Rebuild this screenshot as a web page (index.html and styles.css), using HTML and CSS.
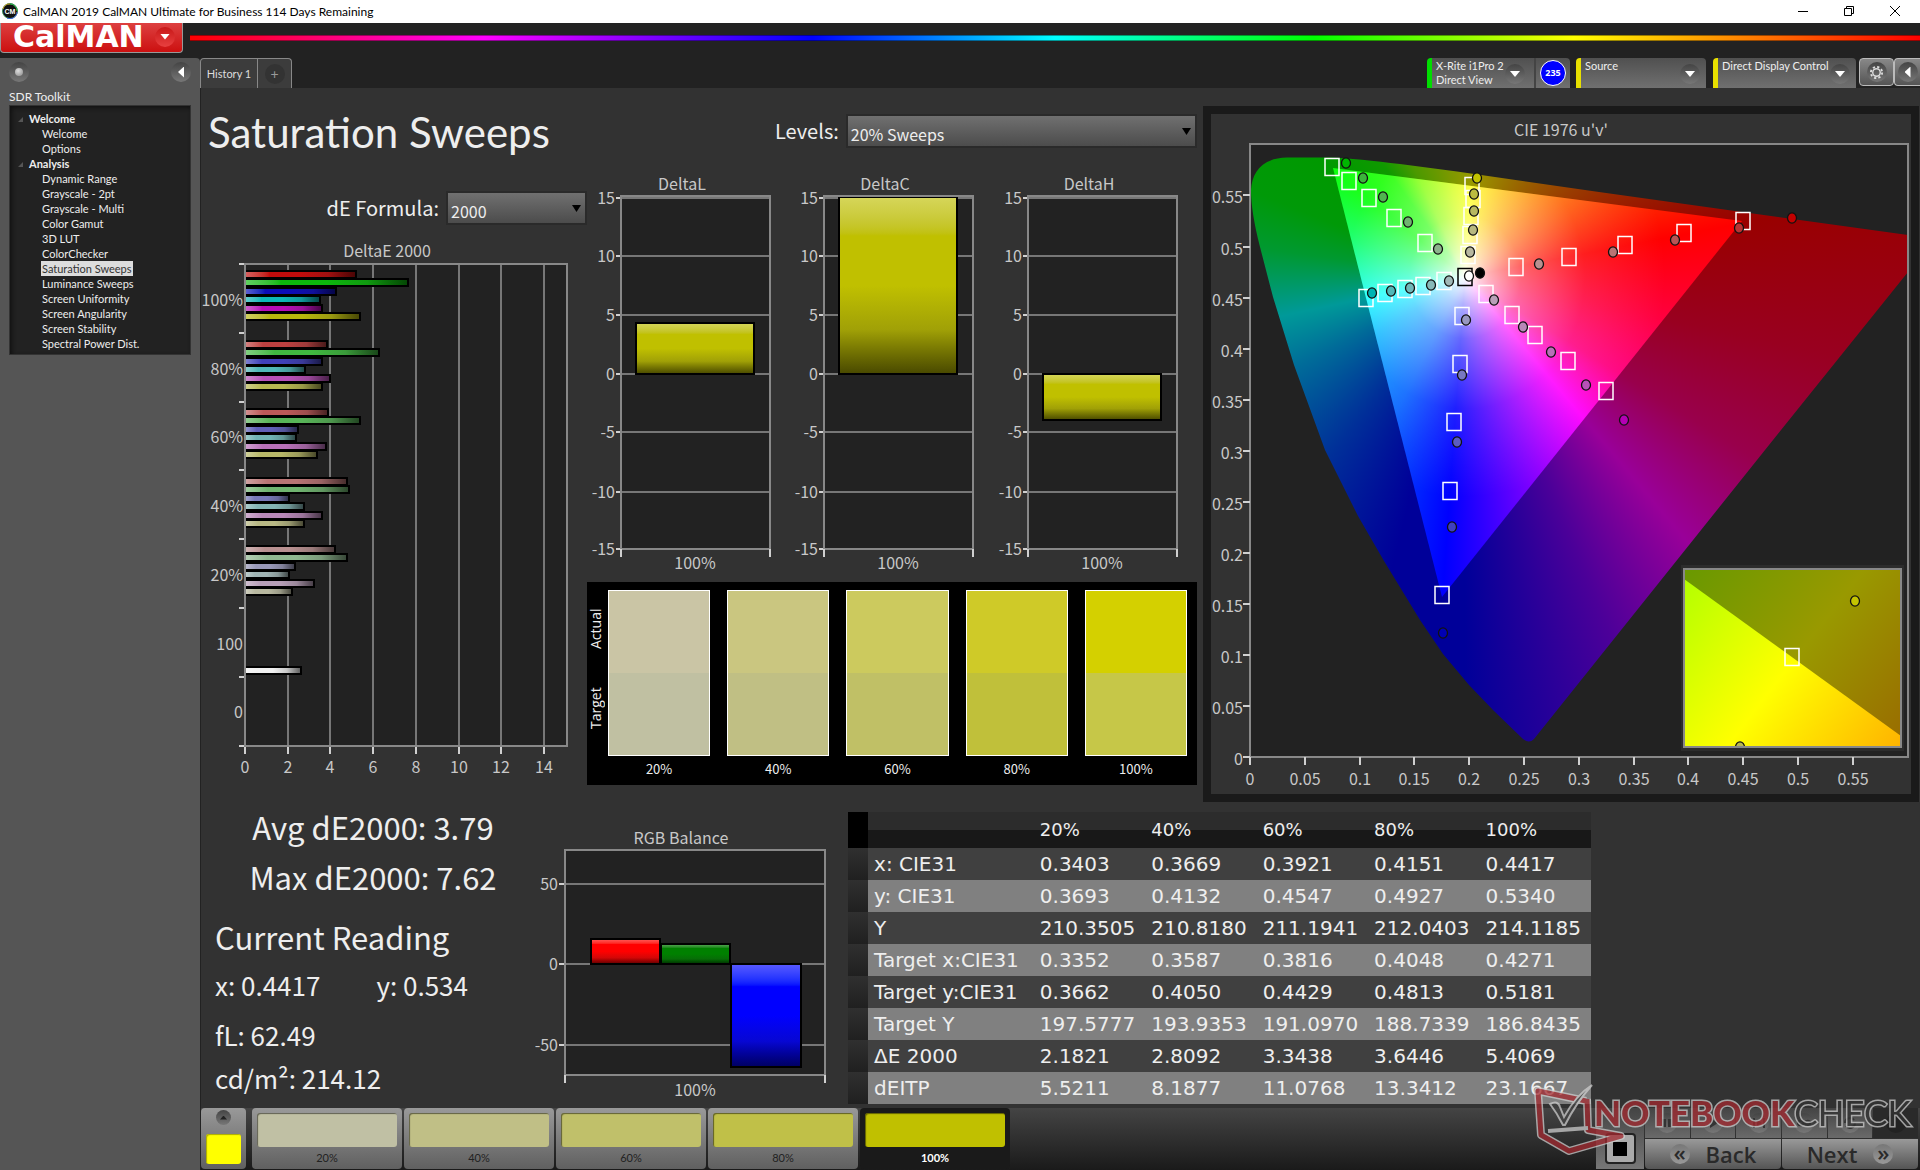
FILE: index.html
```html
<!DOCTYPE html>
<html lang="en">
<head>
    <meta charset="UTF-8">
    <meta name="viewport" content="width=device-width, initial-scale=1.0">
    <title>CalMAN 2019 CalMAN Ultimate for Business</title>
    <link rel="stylesheet" href="styles.css">
</head>
<body>
    <header class="titlebar">
        <svg class="app-icon" viewBox="0 0 16 16" width="16" height="16">
            <circle cx="8" cy="8" r="7.5" fill="#111" stroke="#3a8a5a"/>
            <path d="M1 6A7 7 0 0 1 8 1" stroke="#d0a020" fill="none"/>
            <path d="M8 1A7 7 0 0 1 15 8" stroke="#30c050" fill="none"/>
            <path d="M15 9A7 7 0 0 1 5 15" stroke="#4060e0" fill="none"/>
            <text x="8" y="11" text-anchor="middle" class="app-icon-text">CM</text>
        </svg>
        <span class="titlebar-text">CalMAN 2019 CalMAN Ultimate for Business 114 Days Remaining</span>
        <div class="window-buttons">
            <button aria-label="Minimize"><svg viewBox="0 0 12 12" width="12" height="12"><path d="M1 6.5h10"/></svg></button>
            <button aria-label="Restore"><svg viewBox="0 0 12 12" width="12" height="12"><path d="M1.500 3.500h7v7h-7zM3.500 3.500v-2h7v7h-2"/></svg></button>
            <button aria-label="Close"><svg viewBox="0 0 12 12" width="12" height="12"><path d="M1 1l10 10M11 1l-10 10"/></svg></button>
        </div>
    </header>

    <div class="brandbar">
        <button class="brand">CalMAN<span class="round brand-arrow"><i class="tri-down"></i></span></button>
        <div class="rainbow"></div>
    </div>

    <div class="shell">
        <aside class="sidebar">
            <div class="sidebar-top">
                <button class="round" aria-label="Pin"><i class="pin"></i></button>
                <button class="round" aria-label="Collapse"><i class="tri-left"></i></button>
            </div>
            <h2 class="toolkit">SDR Toolkit</h2>
            <nav class="tree">
                <h3>Welcome</h3>
                <ul>
                    <li><a href="#">Welcome</a></li>
                    <li><a href="#">Options</a></li>
                </ul>
                <h3>Analysis</h3>
                <ul>
                    <li><a href="#">Dynamic Range</a></li>
                    <li><a href="#">Grayscale - 2pt</a></li>
                    <li><a href="#">Grayscale - Multi</a></li>
                    <li><a href="#">Color Gamut</a></li>
                    <li><a href="#">3D LUT</a></li>
                    <li><a href="#">ColorChecker</a></li>
                    <li><a href="#" class="current">Saturation Sweeps</a></li>
                    <li><a href="#">Luminance Sweeps</a></li>
                    <li><a href="#">Screen Uniformity</a></li>
                    <li><a href="#">Screen Angularity</a></li>
                    <li><a href="#">Screen Stability</a></li>
                    <li><a href="#">Spectral Power Dist.</a></li>
                </ul>
            </nav>
        </aside>

        <div class="content">
            <div class="toolbar">
                <div class="tabs">
                    <button class="tab">History 1</button>
                    <button class="tab tab-add" aria-label="Add tab"><span class="round">+</span></button>
                </div>
                <div class="devices">
                    <button class="device meter"><span>X-Rite i1Pro 2<br>Direct View</span><span class="round"><i class="tri-down"></i></span></button>
                    <button class="level"><span>235</span></button>
                    <button class="device source"><span>Source</span><span class="round"><i class="tri-down"></i></span></button>
                    <button class="device display"><span>Direct Display Control</span><span class="round"><i class="tri-down"></i></span></button>
                    <button class="square" aria-label="Settings"><span class="round">
                        <svg viewBox="0 0 16 16" width="15" height="15"><circle cx="8" cy="8" r="4" fill="none" stroke="#ddd" stroke-width="1.500"/><circle cx="8" cy="8" r="6" fill="none" stroke="#ddd" stroke-width="2" stroke-dasharray="2.400 2.310"/></svg>
                    </span></button>
                    <button class="square last" aria-label="Collapse panel"><span class="round"><i class="tri-left"></i></span></button>
                </div>
            </div>

            <main class="workspace">
                <section class="row-top">
                    <div class="col-left">
                        <h1>Saturation Sweeps</h1>
                        <div class="field formula">
                            <label for="formula">dE Formula:</label>
                            <div class="select"><select id="formula"><option>2000</option></select></div>
                        </div>
                        <svg id="deltaE" class="chart" viewBox="201 225 386 565"></svg>
                    </div>
                    <div class="col-mid">
                        <div class="field levels">
                            <label for="levels">Levels:</label>
                            <div class="select"><select id="levels"><option>20% Sweeps</option></select></div>
                        </div>
                        <svg id="deltas" class="chart" viewBox="587 148 616 434"></svg>
                        <div class="swatches">
                            <div class="swatch-side"><span>Actual</span><span>Target</span></div>
                            <figure><div class="pair s20"></div><figcaption>20%</figcaption></figure>
                            <figure><div class="pair s40"></div><figcaption>40%</figcaption></figure>
                            <figure><div class="pair s60"></div><figcaption>60%</figcaption></figure>
                            <figure><div class="pair s80"></div><figcaption>80%</figcaption></figure>
                            <figure><div class="pair s100"></div><figcaption>100%</figcaption></figure>
                        </div>
                    </div>
                    <div class="cie-panel">
                        <svg id="cie" class="chart" viewBox="1211 114 700 680">
                            <defs>
                                <clipPath id="locus"><path d="M1251 190C1252 172 1262 158 1287 157.500L1330 157.500C1347 158 1375 161 1400 164L1457 171.500L1599 192L1742 212L1908 235V272L1765 450L1534 739Q1529 744 1523 739L1494 711L1469 685L1443 654L1420 620L1384 561L1358 516L1325 450L1294 365L1273 297L1260 247Q1251 212 1251 190Z"/></clipPath>
                                <clipPath id="gamut"><path d="M1333 168L1742 221L1442 597Z"/></clipPath>
                                <clipPath id="insetClip"><rect x="1684" y="569" width="217" height="178"/></clipPath>
                                <linearGradient id="insetDark" gradientUnits="userSpaceOnUse" x1="1690" y1="573" x2="1904" y2="739"><stop offset="0" stop-color="#6b9900"/><stop offset=".5" stop-color="#999900"/><stop offset="1" stop-color="#996c00"/></linearGradient>
                                <linearGradient id="insetLight" gradientUnits="userSpaceOnUse" x1="1690" y1="573" x2="1904" y2="739"><stop offset="0" stop-color="#b4ff00"/><stop offset=".5" stop-color="#ffff00"/><stop offset="1" stop-color="#ffb400"/></linearGradient>
                            </defs>
                            <rect class="plot" x="1250" y="144" width="658" height="613"/>
                            <foreignObject x="1250" y="144" width="658" height="613" clip-path="url(#locus)"><div class="hues hues-dark"></div></foreignObject>
                            <foreignObject x="1250" y="144" width="658" height="613" clip-path="url(#gamut)"><div class="hues"></div></foreignObject>
                            <rect class="frame" x="1250" y="144" width="658" height="613"/>
                        </svg>
                    </div>
                </section>

                <section class="row-bottom">
                    <div class="readings">
                        <p class="big total">Avg dE2000: 3.79</p>
                        <p class="big total">Max dE2000: 7.62</p>
                        <h2 class="big">Current Reading</h2>
                        <p class="xy"><span>x: 0.4417</span><span>y: 0.534</span></p>
                        <p class="lum">fL: 62.49</p>
                        <p class="cd">cd/m²: 214.12</p>
                    </div>
                    <svg id="rgb" class="chart" viewBox="535 802 313 306"></svg>
                    <table class="results">
                        <thead>
                            <tr><td class="gutter"></td><th></th><th>20%</th><th>40%</th><th>60%</th><th>80%</th><th>100%</th></tr>
                        </thead>
                        <tbody>
                            <tr><td class="gutter"></td><th>x: CIE31</th><td>0.3403</td><td>0.3669</td><td>0.3921</td><td>0.4151</td><td>0.4417</td></tr>
                            <tr><td class="gutter"></td><th>y: CIE31</th><td>0.3693</td><td>0.4132</td><td>0.4547</td><td>0.4927</td><td>0.5340</td></tr>
                            <tr><td class="gutter"></td><th>Y</th><td>210.3505</td><td>210.8180</td><td>211.1941</td><td>212.0403</td><td>214.1185</td></tr>
                            <tr><td class="gutter"></td><th>Target x:CIE31</th><td>0.3352</td><td>0.3587</td><td>0.3816</td><td>0.4048</td><td>0.4271</td></tr>
                            <tr><td class="gutter"></td><th>Target y:CIE31</th><td>0.3662</td><td>0.4050</td><td>0.4429</td><td>0.4813</td><td>0.5181</td></tr>
                            <tr><td class="gutter"></td><th>Target Y</th><td>197.5777</td><td>193.9353</td><td>191.0970</td><td>188.7339</td><td>186.8435</td></tr>
                            <tr><td class="gutter"></td><th>ΔE 2000</th><td>2.1821</td><td>2.8092</td><td>3.3438</td><td>3.6446</td><td>5.4069</td></tr>
                            <tr><td class="gutter"></td><th>dEITP</th><td>5.5211</td><td>8.1877</td><td>11.0768</td><td>13.3412</td><td>23.1667</td></tr>
                        </tbody>
                    </table>
                </section>
            </main>

            <footer class="bottombar">
                <button class="picker" aria-label="Pattern colour"><span class="round small"><i class="tri-up"></i></span><span class="picker-color"></span></button>
                <div class="steps">
                    <button class="step p20"><span></span>20%</button>
                    <button class="step p40"><span></span>40%</button>
                    <button class="step p60"><span></span>60%</button>
                    <button class="step p80"><span></span>80%</button>
                    <button class="step p100 active"><span></span>100%</button>
                </div>
                <button class="stop" aria-label="Stop"><i></i></button>
                <div class="controls">
                    <div class="transport">
                        <button aria-label="Pause"><span class="round"><svg viewBox="0 0 16 16" width="16" height="16"><path d="M3 4h4v8h-4zM9 4h4v8h-4z"/></svg></span></button>
                        <button aria-label="Play"><span class="round"><svg viewBox="0 0 16 16" width="16" height="16"><path d="M5 3l8 5-8 5z"/></svg></span></button>
                        <button aria-label="Play range"><span class="round"><svg viewBox="0 0 16 16" width="16" height="16"><path d="M2 3h2v10h-2zM12 3h2v10h-2zM6 5l5 3-5 3z"/></svg></span></button>
                        <button aria-label="Loop"><span class="round"><svg viewBox="0 0 16 16" width="16" height="16"><path class="stroked" d="M8 8C6 5 2 5 2 8s4 3 6 0 6-3 6 0-4 3-6 0z"/></svg></span></button>
                        <button aria-label="Refresh"><span class="round"><svg viewBox="0 0 16 16" width="16" height="16"><path class="stroked" d="M3 8a5 5 0 0 1 9-3M13 8a5 5 0 0 1-9 3"/></svg></span></button>
                        <button class="off" aria-label="Record"><span class="round"></span></button>
                    </div>
                    <div class="pager">
                        <button><span class="round">«</span>Back</button>
                        <button>Next<span class="round">»</span></button>
                    </div>
                </div>
            </footer>
        </div>
    </div>

    <svg class="watermark" viewBox="1530 1082 384 80" width="384" height="80">
        <g fill="none" stroke-linejoin="round">
            <path d="M1586 1101L1538 1091L1541 1135L1569 1151L1621 1136L1588 1130L1587 1099" stroke="#ccc" stroke-width="8"/>
            <path d="M1586 1101L1538 1091L1541 1135L1569 1151L1621 1136L1588 1130L1587 1099" stroke="#a32a30" stroke-width="5"/>
            <path d="M1548 1131L1588 1128" stroke="#ccc" stroke-width="4"/>
        </g>
        <path d="M1550 1104q8-4 10 3l4 10q12-22 28-32q-16 18-27 40h-2q-6-12-13-21z" fill="#444" stroke="#ccc" stroke-width="2"/>
        <text x="1594" y="1126"><tspan class="wm-red">NOTEBOOK</tspan><tspan class="wm-gray">CHECK</tspan></text>
    </svg>
    <script src="charts.js"></script>
</body>
</html>
```

FILE: charts.js
```js
const NS = 'http://www.w3.org/2000/svg';

function add(parent, tag, attrs, text) {
    const el = document.createElementNS(NS, tag);
    for (const key in attrs) el.setAttribute(key, attrs[key]);
    if (text !== undefined) el.textContent = text;
    parent.appendChild(el);
    return el;
}

function line(svg, x1, y1, x2, y2, cls) {
    add(svg, 'line', { x1, y1, x2, y2, class: cls });
}

function label(svg, x, y, text, anchor) {
    add(svg, 'text', { x, y, 'text-anchor': anchor || 'middle', class: 'axis' }, text);
}

// glossy bar fill: light edge, flat colour, dark edge
let gradientCount = 0;
function gloss(svg, color, horizontal) {
    const id = 'gloss' + gradientCount++;
    const g = add(svg, 'linearGradient', { id, x1: 0, y1: 0, x2: horizontal ? 1 : 0, y2: horizontal ? 0 : 1 });
    add(g, 'stop', { offset: 0, 'stop-color': `color-mix(in srgb, ${color} 65%, white)` });
    add(g, 'stop', { offset: 0.22, 'stop-color': color });
    add(g, 'stop', { offset: 0.5, 'stop-color': color });
    add(g, 'stop', { offset: 0.75, 'stop-color': `color-mix(in srgb, ${color} 80%, #222)` });
    add(g, 'stop', { offset: 1, 'stop-color': `color-mix(in srgb, ${color} 38%, black)` });
    return `url(#${id})`;
}

function bar(svg, x, y, width, height, color, horizontal) {
    add(svg, 'rect', { x, y, width, height, fill: gloss(svg, color, horizontal), stroke: '#000', 'stroke-width': 2 });
}

function drawDeltaE() {
    const svg = document.getElementById('deltaE');
    const left = 245, right = 567, top = 264, bottom = 746;
    label(svg, 387, 257, 'DeltaE 2000');
    add(svg, 'rect', { x: left, y: top, width: right - left, height: bottom - top, class: 'plot' });
    for (let i = 0; i <= 14; i += 2) {
        const x = Math.round(left + i * 21.35);
        line(svg, x, top, x, bottom, 'grid');
        line(svg, x, bottom, x, bottom + 8, 'tick');
        label(svg, x, 773, i);
    }
    ['100%', '80%', '60%', '40%', '20%', '100', '0'].forEach((name, i) => {
        label(svg, 243, 306 + Math.round(i * 68.7), name, 'end');
    });
    for (let i = 0; i < 8; i++) {
        const y = Math.round(top + i * 68.8);
        line(svg, 239, y, 244, y, 'tick');
    }
    const groups = [
        [271, [356, 408, 336, 320, 322, 360], ['#c00c0c', '#0cb80c', '#0c0cb8', '#0cb8b8', '#b80cb8', '#b8b80c']],
        [341, [327, 379, 322, 305, 330, 322], ['#bc4040', '#40b840', '#4040b8', '#50b8b8', '#b850b8', '#b8b850']],
        [409, [328, 360, 298, 296, 326, 317], ['#bc5858', '#58b458', '#6060b8', '#70b4b4', '#b870b8', '#b8b868']],
        [478, [347, 349, 289, 304, 322, 304], ['#b87474', '#70b470', '#7878b8', '#84b4b4', '#b888b8', '#b8b884']],
        [546, [335, 347, 295, 289, 314, 292], ['#b89090', '#90b890', '#9898b8', '#a0b4b4', '#b8a0b8', '#b8b8a0']]
    ];
    groups.forEach(([y, ends, colors]) => {
        ends.forEach((end, i) => bar(svg, left, y + Math.round(i * 8.4), end - left, 7, colors[i], true));
    });
    bar(svg, left, 667, 56, 7, '#f0f0f0', true);
    add(svg, 'rect', { x: left, y: top, width: right - left, height: bottom - top, class: 'frame' });
}

function drawDeltas() {
    const svg = document.getElementById('deltas');
    const rows = [[15, 198], [10, 256], [5, 315], [0, 374], [-5, 432], [-10, 492], [-15, 549]];
    const charts = [
        ['DeltaL', 621, 323, 51],
        ['DeltaC', 824, 197, 177],
        ['DeltaH', 1028, 374, 46]
    ];
    charts.forEach(([name, x, barTop, barHeight]) => {
        label(svg, x + 61, 190, name);
        add(svg, 'rect', { x, y: 196, width: 149, height: 353, class: 'plot' });
        rows.forEach(([value, y]) => {
            line(svg, x, y, x + 149, y, 'grid');
            line(svg, x - 5, y, x, y, 'tick');
            label(svg, x - 6, y + 6, value, 'end');
        });
        line(svg, x, 197, x + 149, 197, 'grid');
        bar(svg, x + 15, barTop, 118, barHeight, '#c0c000', false);
        add(svg, 'rect', { x, y: 196, width: 149, height: 353, class: 'frame' });
        line(svg, x, 549, x, 557, 'tick');
        line(svg, x + 149, 549, x + 149, 557, 'tick');
        label(svg, x + 74, 569, '100%');
    });
}

function drawRgb() {
    const svg = document.getElementById('rgb');
    label(svg, 681, 844, 'RGB Balance');
    add(svg, 'rect', { x: 565, y: 850, width: 260, height: 225, class: 'plot' });
    [[50, 884], [0, 964], [-50, 1045]].forEach(([value, y]) => {
        line(svg, 565, y, 825, y, 'grid');
        line(svg, 559, y, 565, y, 'tick');
        label(svg, 558, y + 6, value, 'end');
    });
    bar(svg, 591, 939, 69, 25, '#ff0000');
    bar(svg, 661, 944, 69, 20, '#008000');
    bar(svg, 731, 964, 70, 103, '#0000ff');
    add(svg, 'rect', { x: 565, y: 850, width: 260, height: 225, class: 'frame' });
    line(svg, 565, 1075, 565, 1083, 'tick');
    line(svg, 825, 1075, 825, 1083, 'tick');
    label(svg, 695, 1096, '100%');
}

function square(svg, x, y, stroke) {
    add(svg, 'rect', { x: x - 7, y: y - 8.5, width: 14, height: 17, fill: 'none', stroke: stroke || '#fff', 'stroke-width': 1.5 });
}

function dot(svg, x, y, fill) {
    add(svg, 'ellipse', { cx: x, cy: y, rx: 4.5, ry: 5.2, fill, stroke: '#111', 'stroke-width': 1.3 });
}

function drawCie() {
    const svg = document.getElementById('cie');
    label(svg, 1561, 136, "CIE 1976 u'v'");
    for (let i = 0; i <= 11; i++) {
        const value = String(Math.round(i * 5) / 100);
        const x = Math.round(1250 + i * 54.8);
        const y = Math.round(757 - i * 51.05);
        line(svg, x, 757, x, 765, 'tick');
        label(svg, x, 785, value);
        line(svg, 1243, y, 1250, y, 'tick');
        label(svg, 1243, y + 8, value, 'end');
    }
    const targets = [
        [1332, 167], [1349, 181], [1369, 198], [1394, 218], [1425, 243],
        [1472, 186], [1473, 199], [1471, 216], [1470, 235], [1468, 255],
        [1366, 298], [1385, 293], [1405, 289], [1423, 286], [1444, 281],
        [1516, 267], [1569, 257], [1625, 245], [1684, 233], [1743, 221],
        [1486, 294], [1512, 315], [1535, 335], [1568, 361], [1606, 391],
        [1462, 316], [1460, 364], [1454, 422], [1450, 491], [1442, 595]
    ];
    const measured = [
        [1346, 163, '#00b400'], [1363, 178, '#3cb43c'], [1383, 197, '#50b450'], [1408, 222, '#70b470'], [1438, 249, '#8cb48c'],
        [1477, 178, '#c4c400'], [1474, 194, '#bcbc40'], [1474, 211, '#b8b860'], [1473, 230, '#b8b880'], [1470, 252, '#b8b8a0'],
        [1539, 264, '#b89090'], [1613, 252, '#b87474'], [1675, 240, '#b85454'], [1739, 228, '#b83434'], [1792, 218, '#c40000'],
        [1494, 300, '#b8a0b8'], [1523, 327, '#b888b8'], [1551, 352, '#b870b8'], [1586, 385, '#b850b8'], [1624, 420, '#b400b4'],
        [1466, 320, '#9898c0'], [1462, 375, '#7878c0'], [1457, 442, '#5c5cc0'], [1452, 527, '#4040c0'], [1443, 633, '#0000b4'],
        [1372, 293, '#00b4b4'], [1391, 291, '#50b8b8'], [1410, 288, '#70b8b8'], [1431, 285, '#88b8b8'], [1449, 281, '#a0b8b8'],
        [1480, 273, '#000']
    ];
    targets.forEach(([x, y]) => square(svg, x, y));
    square(svg, 1465, 277, '#000');
    measured.forEach(([x, y, fill]) => dot(svg, x, y, fill));
    dot(svg, 1469, 276, '#fff');

    // magnified view round the selected target
    add(svg, 'rect', { x: 1681, y: 565, width: 223, height: 186, fill: '#2c2c2c' });
    add(svg, 'rect', { x: 1684, y: 569, width: 217, height: 178, fill: 'url(#insetDark)' });
    add(svg, 'path', { d: 'M1684 579L1901 736V747H1684Z', fill: 'url(#insetLight)' });
    const inset = add(svg, 'g', { 'clip-path': 'url(#insetClip)' });
    dot(inset, 1855, 601, '#c4c400');
    dot(inset, 1740, 747, '#b8b850');
    square(inset, 1792, 657);
    add(svg, 'rect', { x: 1684, y: 569, width: 217, height: 178, class: 'frame' });
}

drawDeltaE();
drawDeltas();
drawRgb();
drawCie();
```

FILE: styles.css
```css
* {
    box-sizing: border-box;
}
body {
    margin: 0;
    min-height: 100vh;
    display: flex;
    flex-direction: column;
    background: #222;
    color: #eee;
    font-family: "Lato", "Liberation Sans", sans-serif;
    font-size: 11px;
}
h1, h2, h3, p, ul, figure {
    margin: 0;
    padding: 0;
    font-weight: normal;
}
ul {
    list-style: none;
}
button {
    border: none;
    padding: 0;
    color: inherit;
    font: inherit;
    background: none;
    white-space: nowrap;
}

/* window title */
.titlebar {
    height: 23px;
    display: flex;
    align-items: center;
    gap: 5px;
    padding-left: 2px;
    padding-bottom: 1px;
    background: #fff;
    color: #000;
    font-family: "Lato", sans-serif;
    font-size: 12px;
}
.app-icon-text {
    font: bold 7px "Liberation Sans", sans-serif;
    fill: #fff;
}
.window-buttons {
    margin-left: auto;
    display: flex;
    padding-right: 2px;
}
.window-buttons button {
    width: 46px;
    height: 20px;
}
.window-buttons svg {
    fill: none;
    stroke: #000;
    display: block;
    margin: 0 auto;
}

/* logo and rainbow strip */
.brandbar {
    height: 35px;
    display: flex;
    gap: 7px;
}
.brand {
    width: 183px;
    height: 30px;
    display: flex;
    align-items: center;
    justify-content: space-between;
    padding: 0 7px 2px 12px;
    border: 1px solid #999;
    border-top: none;
    border-radius: 0 0 4px 4px;
    background: linear-gradient(#dd4040, #cc1010);
    color: #fff;
    font: bold 30px/28px "DejaVu Sans", sans-serif;
}
.rainbow {
    flex: 1;
    height: 6px;
    margin-top: 12px;
    border: 1px solid rgba(0, 0, 0, 0.4);
    border-width: 1px 0;
    background: linear-gradient(90deg, #f00, #f0f 17%, #00f 36%, #0ff 50%, #0f0 65%, #ff0 80%, #f00);
}
.round {
    width: 20px;
    height: 20px;
    border-radius: 50%;
    display: flex;
    align-items: center;
    justify-content: center;
    flex: none;
    background: linear-gradient(#444, #777);
}
.brand-arrow {
    background: linear-gradient(#c81818, #e84040);
}
.tri-down, .tri-left, .tri-up {
    width: 10px;
    height: 6px;
    background: #fff;
    clip-path: polygon(0 0, 100% 0, 50% 100%);
}
.tri-left {
    width: 6px;
    height: 11px;
    clip-path: polygon(100% 0, 100% 100%, 0 50%);
}
.tri-up {
    width: 7px;
    height: 4px;
    background: #222;
    clip-path: polygon(50% 0, 100% 100%, 0 100%);
}

/* sidebar */
.shell {
    flex: 1;
    display: flex;
}
.sidebar {
    width: 200px;
    flex: none;
    padding: 4px 9px;
    border-radius: 0 4px 0 0;
    background: #555;
}
.sidebar-top {
    display: flex;
    justify-content: space-between;
    align-items: center;
}
.pin {
    width: 8px;
    height: 8px;
    border-radius: 50%;
    background: radial-gradient(circle at 40% 35%, #ddd, #888);
}
.toolkit {
    margin: 6px 0 0;
    font-size: 12px;
    line-height: 17px;
}
.tree {
    padding: 5px 0 3px;
    background: #222;
    border: 1px solid #333;
    box-shadow: inset 2px 2px 4px #111;
}
.tree h3 {
    position: relative;
    padding-left: 19px;
    font-size: 11px;
    line-height: 15px;
    font-weight: bold;
}
.tree h3::before {
    content: "";
    position: absolute;
    left: 8px;
    top: 6px;
    width: 5px;
    height: 5px;
    background: #555;
    clip-path: polygon(100% 0, 100% 100%, 0 100%);
}
.tree li {
    padding-left: 32px;
    line-height: 15px;
}
.tree a {
    color: #eee;
    text-decoration: none;
}
.tree .current {
    background: #ddd;
    color: #333;
    outline: 1px solid #ddd;
}

/* tabs and devices */
.content {
    flex: 1;
    min-width: 0;
    display: flex;
    flex-direction: column;
}
.toolbar {
    height: 30px;
    display: flex;
    justify-content: space-between;
}
.tabs, .devices {
    display: flex;
}
.tab {
    width: 58px;
    height: 30px;
    border: 1px solid #888;
    border-bottom: none;
    border-radius: 4px 0 0 0;
    background: #3c3c3c;
    color: #ddd;
    text-align: center;
}
.tab-add {
    width: 34px;
    display: flex;
    align-items: center;
    justify-content: center;
    border-left: none;
    border-radius: 0 4px 0 0;
}
.tab-add .round {
    background: #333;
    color: #999;
    font-size: 14px;
}
.device {
    display: flex;
    justify-content: space-between;
    height: 30px;
    padding: 1px 6px 0 4px;
    border-left: 5px solid #e8e000;
    border-radius: 4px 4px 0 0;
    background: linear-gradient(#505050, #707070);
    line-height: 14px;
    text-align: left;
    margin-right: 7px;
}
.device .round {
    margin-top: 5px;
}
.device.meter {
    width: 107px;
    padding-right: 9px;
    border-left-color: #00dd00;
    border-radius: 4px 0 0 0;
    margin-right: 0;
}
.level {
    width: 36px;
    margin-right: 6px;
    border-left: 2px solid #444;
    border-radius: 0 4px 0 0;
    background: linear-gradient(#505050, #707070);
}
.level span {
    width: 26px;
    height: 26px;
    margin: 0 auto;
    display: block;
    border: 1px solid #fff;
    border-radius: 50%;
    background: #00f;
    color: #fff;
    font: bold 9px/24px "Open Sans", sans-serif;
}
.device.source {
    width: 130px;
}
.device.display {
    width: 143px;
    margin-right: 3px;
}
.square {
    width: 35px;
    height: 28px;
    display: flex;
    align-items: center;
    justify-content: center;
    border: 1px solid #bbb;
    border-radius: 4px;
    background: linear-gradient(#888, #555);
}
.square.last {
    width: 26px;
    border-right: none;
    border-radius: 4px 0 0 4px;
}

/* work area */
.workspace {
    flex: 1;
    background: #323232;
    border-left: 1px solid #222;
    font-family: "Noto Sans CJK SC", "Lato", sans-serif;
}
.row-top {
    display: grid;
    grid-template-columns: minmax(0, 386fr) minmax(0, 616fr) minmax(0, 717fr);
}
.chart {
    display: block;
    width: 100%;
}
.col-left {
    padding-top: 14px;
}
h1 {
    padding-left: 7px;
    font-family: "Lato", sans-serif;
    font-size: 42px;
    line-height: 60px;
    white-space: nowrap;
}
.field {
    display: flex;
    align-items: center;
    gap: 7px;
}
.field label {
    font-size: 20px;
    line-height: 34px;
    white-space: nowrap;
}
.formula {
    margin-top: 29px;
    justify-content: flex-end;
}
.formula .select {
    width: 141px;
}
.levels {
    padding: 26px 6px 0 188px;
}
.levels .select {
    flex: 1;
}
.select {
    position: relative;
}
.select::after {
    content: "";
    position: absolute;
    right: 6px;
    top: 14px;
    width: 9px;
    height: 7px;
    background: #000;
    clip-path: polygon(0 0, 100% 0, 50% 100%);
    pointer-events: none;
}
select {
    display: block;
    width: 100%;
    height: 34px;
    padding: 5px 3px 0;
    appearance: none;
    border: 2px solid #2a2a2a;
    border-radius: 0;
    background: linear-gradient(#707070, #4c4c4c);
    color: #eee;
    font-family: inherit;
    font-size: 16px;
}

/* chart parts */
.axis {
    font-size: 16px;
    fill: #c8c8c8;
}
.plot {
    fill: #222;
}
.frame {
    fill: none;
    stroke: #888;
    stroke-width: 2;
}
.grid {
    stroke: #777;
    stroke-width: 2;
}
.tick {
    stroke: #d0d0d0;
    stroke-width: 2;
}

.swatches {
    height: 203px;
    margin-right: 6px;
    padding: 8px 10px 0 1px;
    display: flex;
    gap: 17px;
    background: #000;
}
.swatch-side {
    width: 16px;
    height: 166px;
    margin-right: -13px;
    padding-top: 8px;
    display: flex;
    flex-direction: row-reverse;
    justify-content: space-around;
    writing-mode: vertical-rl;
    transform: rotate(180deg);
    font: 14px/16px "Open Sans", sans-serif;
}
.swatches figure {
    flex: 1;
    text-align: center;
}
.pair {
    height: 166px;
    border: 1px solid #fff;
}
figcaption {
    font-size: 13px;
    line-height: 26px;
}
.s20 { background: linear-gradient(#cac5a5 50%, #c0c0a2 50%); }
.s40 { background: linear-gradient(#cac680 50%, #c0bf84 50%); }
.s60 { background: linear-gradient(#ccca5e 50%, #c0c066 50%); }
.s80 { background: linear-gradient(#cfca28 50%, #c0c03a 50%); }
.s100 { background: linear-gradient(#d4d000 50%, #c6c748 50%); }

.cie-panel {
    margin: 18px 1px 0 0;
    align-self: start;
    border: 8px solid #1a1a1a;
}
/* chromaticity colours turn about the white point */
.hues {
    width: 658px;
    height: 613px;
    background:
        radial-gradient(ellipse 200px 220px at 215px 133px, #fff, rgba(255, 255, 255, 0.7) 12%, rgba(255, 255, 255, 0.4) 28%, rgba(255, 255, 255, 0.12) 60%, transparent),
        conic-gradient(from 4deg at 215px 133px, #ff0, #ffa000 29deg, #ff5000 53deg, #f00 75deg, #ff0040 98deg, #ff0080 118deg, #f0f 136deg, #8000ff 158deg, #00f 180deg, #0060ff 203deg, #00b4ff 233deg, #0ff 254deg, #00ff60 284deg, #0f0 305deg, #20ff00 320deg, #80ff00 331deg, #d0ff00 348deg, #ff0);
}
.hues-dark {
    background: conic-gradient(from 4deg at 215px 133px, #990, #996000 29deg, #993000 53deg, #900 75deg, #990020 98deg, #99004c 118deg, #909 136deg, #4c0099 154deg, #009 176deg, #009 190deg, #003099 213deg, #006c99 238deg, #099 254deg, #009930 274deg, #009908 288deg, #090 305deg, #109900 320deg, #4c9900 331deg, #7c9900 348deg, #990);
}

/* readings */
.row-bottom {
    display: grid;
    grid-template-columns: minmax(0, 334fr) minmax(0, 313fr) minmax(0, 743fr) minmax(0, 329fr);
    align-items: start;
}
.readings {
    padding: 0 4px 0 14px;
    font-size: 26px;
    line-height: 40px;
    white-space: nowrap;
}
.big {
    font-size: 31px;
    line-height: 50px;
}
.total {
    text-align: center;
}
h2.big {
    margin-top: 10px;
}
.xy {
    display: flex;
    gap: 56px;
    margin-top: 3px;
}
.lum {
    margin-top: 10px;
}
.cd {
    margin-top: 3px;
}

.results {
    width: 100%;
    margin-top: 10px;
    border-collapse: collapse;
    table-layout: fixed;
    font: 20px "DejaVu Sans", sans-serif;
}
.results th, .results td {
    height: 32px;
    padding: 0 0 0 6px;
    text-align: left;
    font-weight: normal;
    line-height: 24px;
    white-space: nowrap;
}
.results thead th {
    height: 36px;
    width: 15%;
    font-size: 18px;
    background: linear-gradient(#2c2c2c 50%, #181818 50%);
}
.results thead th:nth-child(2) {
    width: 165px;
}
.results thead .gutter {
    width: 20px;
    background: #000;
}
.results tbody .gutter {
    background: linear-gradient(#303030, #202020);
}
.results tbody tr {
    background: #404040;
}
.results tbody tr:nth-child(even) {
    background: #808080;
}

/* bottom bar */
.bottombar {
    height: 62px;
    display: flex;
    border-left: 1px solid #222;
    background: linear-gradient(#444, #1a1a1a);
}
.picker {
    width: 45px;
    height: 61px;
    margin-right: 6px;
    display: flex;
    flex-direction: column;
    align-items: center;
    gap: 9px;
    padding-top: 2px;
    border-radius: 4px;
    background: linear-gradient(#999, #606060);
}
.small {
    width: 15px;
    height: 15px;
}
.picker-color {
    width: 35px;
    height: 30px;
    border-radius: 3px;
    background: #ff0;
    box-shadow: inset 1px 1px 1px #aa0;
}
.steps {
    display: flex;
    gap: 2px;
}
.step {
    width: 150px;
    height: 61px;
    padding: 5px 5px 0;
    border-radius: 4px;
    background: linear-gradient(#999, #606060);
    color: #222;
    line-height: 22px;
    display: flex;
    flex-direction: column;
    align-items: stretch;
}
.step span {
    height: 36px;
    border-radius: 3px;
    box-shadow: inset 1px 1px 1px rgba(0, 0, 0, 0.5);
}
.p20 span { background: #c0c0a4; }
.p40 span { background: #c0bf86; }
.p60 span { background: #c0c06a; }
.p80 span { background: #c0c048; }
.p100 span { background: #c0c000; }
.step.active {
    background: #1a1a1a;
    color: #fff;
    font-weight: bold;
}
.stop {
    width: 48px;
    height: 61px;
    margin-left: auto;
    display: flex;
    align-items: flex-end;
    justify-content: center;
    padding-bottom: 5px;
    background: linear-gradient(#444, #777);
}
.stop i {
    width: 31px;
    height: 31px;
    border: 2px solid #222;
    border-radius: 4px;
    background: linear-gradient(#000, #000) center / 14px 14px no-repeat #aaa;
}
.controls {
    width: 273px;
    margin: 0 2px 0 1px;
}
.transport, .pager {
    display: flex;
    gap: 1px;
}
.transport {
    margin-bottom: 1px;
}
.transport button {
    flex: 1;
    height: 30px;
    display: flex;
    align-items: center;
    justify-content: center;
    background: linear-gradient(#444, #6a6a6a);
}
.transport .off {
    background: #2a2a2a;
}
.transport .off .round {
    background: #222;
}
.transport path {
    fill: #333;
}
.transport .stroked {
    fill: none;
    stroke: #333;
    stroke-width: 2;
}
.pager button {
    flex: 1;
    height: 30px;
    display: flex;
    align-items: center;
    justify-content: center;
    gap: 16px;
    border-radius: 0 0 4px 4px;
    background: linear-gradient(#999, #555);
    color: #2a2a2a;
    font: 600 22px/28px "Open Sans", sans-serif;
}
.pager .round {
    background: linear-gradient(#777, #999);
    padding-bottom: 4px;
}
.watermark {
    position: fixed;
    right: 6px;
    bottom: 8px;
    opacity: 0.75;
    pointer-events: none;
}
.watermark text {
    font: 900 35px "Lato", sans-serif;
    stroke: #ccc;
    stroke-width: 3;
    paint-order: stroke;
}
.wm-red {
    fill: #a32a30;
}
.watermark .wm-gray {
    font-weight: 400;
    fill: #333;
}
```
